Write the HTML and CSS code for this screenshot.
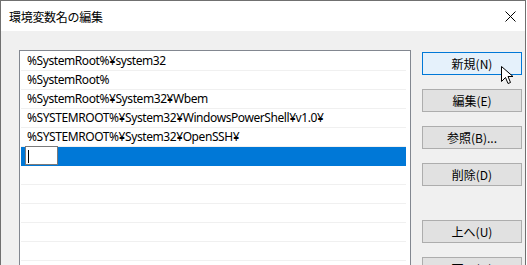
FILE: index.html
```html
<!DOCTYPE html>
<html lang="ja">
<head>
<meta charset="utf-8">
<link rel="stylesheet" href="styles.css">
</head>
<body>
<div class="window">
  <div class="titlebar">
    <span class="title">環境変数名の編集</span>
    <svg class="close" width="11" height="11" viewBox="0 0 11 11"><path d="M0.5 0.5 L10.5 10.5 M10.5 0.5 L0.5 10.5" stroke="#000" stroke-width="1" fill="none"/></svg>
  </div>
  <div class="content">
    <div class="listbox">
      <div class="row">%SystemRoot%¥system32</div>
      <div class="row">%SystemRoot%</div>
      <div class="row">%SystemRoot%¥System32¥Wbem</div>
      <div class="row">%SYSTEMROOT%¥System32¥WindowsPowerShell¥v1.0¥</div>
      <div class="row">%SYSTEMROOT%¥System32¥OpenSSH¥</div>
      <div class="row selected"><div class="editbox"><span class="caret"></span></div></div>
      <div class="row"></div>
      <div class="row"></div>
      <div class="row"></div>
      <div class="row"></div>
      <div class="row"></div>
      <div class="row"></div>
    </div>
    <div class="buttons">
      <div class="btn focused">新規(N)</div>
      <div class="btn">編集(E)</div>
      <div class="btn">参照(B)...</div>
      <div class="btn">削除(D)</div>
      <div class="btn spaced">上へ(U)</div>
      <div class="btn">下へ(O)</div>
    </div>
  </div>
  <svg class="cursor" width="14" height="20" viewBox="0 0 14 20"><path d="M0.5 0.5 L0.5 15.5 L4.5 11.5 L7 17.5 L9.5 16.5 L7 10.5 L12 10.5 Z" fill="#fff" stroke="#000" stroke-width="1" stroke-linejoin="miter"/></svg>
</div>
</body>
</html>
```
FILE: styles.css
```css
html, body {
  margin: 0;
  padding: 0;
  background: #ffffff;
}
body {
  width: 527px;
  height: 265px;
  overflow: hidden;
  font-family: "Noto Sans", "Noto Sans CJK JP", sans-serif;
  font-size: 12px;
  color: #000;
}
.window {
  position: relative;
  width: 524px;
  height: 264px;
  overflow: hidden;
  border: 1px solid #707070;
  border-bottom: none;
  background: #f0f0f0;
}
.titlebar {
  height: 30px;
  background: #fff;
  display: flex;
  align-items: center;
  justify-content: space-between;
  padding: 0 9px 0 8px;
}
.title {
  font-family: "Noto Sans CJK JP", sans-serif;
  font-size: 12px;
  line-height: 14px;
  letter-spacing: -0.3px;
  margin-top: 1px;
}
.close {
  display: block;
  margin-top: 1px;
}
.content {
  display: flex;
  padding: 19px 0 0 18px;
}
.listbox {
  height: 260px;
  border: 1px solid #828790;
  background: #fff;
  padding: 1px 4px 0 1px;
  box-sizing: border-box;
  width: 392px;
  flex: none;
}
.row {
  height: 18px;
  border-bottom: 1px solid #f0f0f0;
  padding-left: 6px;
  line-height: 18px;
  white-space: nowrap;
  font-family: "Noto Sans", "Noto Sans CJK JP", sans-serif;
  font-size: 12px;
  letter-spacing: -0.42px;
}
.row.selected {
  background: #0078d7;
  border-bottom-color: #0078d7;
  padding-left: 4px;
  display: flex;
  align-items: flex-start;
}
.editbox {
  width: 31px;
  height: 17px;
  border: 1px solid #7a7a7a;
  background: #fff;
  margin-top: -1px;
  position: relative;
}
.caret {
  position: absolute;
  left: 2px;
  top: 3px;
  width: 1px;
  height: 13px;
  background: #000;
}
.buttons {
  display: flex;
  flex-direction: column;
  gap: 14px;
  margin-left: 11px;
  padding-top: 2px;
}
.btn {
  width: 98px;
  height: 21px;
  flex: none;
  border: 1px solid #adadad;
  background: #e1e1e1;
  display: flex;
  align-items: center;
  justify-content: center;
  font-family: "Noto Sans CJK JP", sans-serif;
  font-size: 12px;
}
.btn.focused {
  border-color: #0078d7;
  background: #e5f1fb;
}
.btn.spaced {
  margin-top: 20px;
}
.cursor {
  position: absolute;
  left: 500px;
  top: 65px;
}
```
